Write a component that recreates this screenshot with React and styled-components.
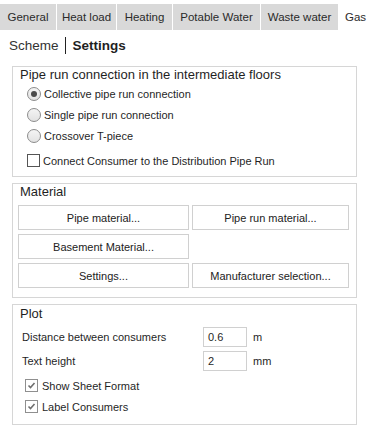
import React from 'react';
import styled, { createGlobalStyle } from 'styled-components';

const GlobalStyle = createGlobalStyle`
  body {
    margin: 0;
    background: #ffffff;
    font-family: "Liberation Sans", Arial, sans-serif;
    color: #1f1f1f;
  }
`;

const Page = styled.div`
  width: 373px;
  height: 431px;
  padding-top: 4px;
  box-sizing: border-box;
`;

const TabBar = styled.div`
  display: flex;
  height: 26px;
`;

const Tab = styled.div`
  display: flex;
  align-items: center;
  justify-content: center;
  width: ${({ w }) => w}px;
  background: ${({ active }) => (active ? '#ffffff' : '#d9d9d9')};
  border-right: 1px solid #ffffff;
  font-size: 11.5px;
  color: #2a2a2a;
  box-sizing: border-box;
`;

const SubNav = styled.div`
  display: flex;
  align-items: center;
  height: 30px;
  padding-left: 9px;
  font-size: 13.5px;
`;

const SubItem = styled.span`
  font-weight: ${({ active }) => (active ? 700 : 400)};
  color: ${({ active }) => (active ? '#1f1f1f' : '#333333')};
`;

const SubDivider = styled.span`
  width: 1px;
  height: 17px;
  background: #222;
  margin: 0 7px 0 6px;
`;

const Content = styled.div`
  display: flex;
  flex-direction: column;
  gap: 6px;
  padding: 6px 0 0 12px;
  width: 345px;
`;

const Group = styled.div`
  border: 1px solid #d6d6d6;
  padding: 0 5px ${({ pb }) => pb}px 5px;
`;

const GroupTitle = styled.div`
  font-size: 13px;
  line-height: ${({ lh }) => lh || 16}px;
  padding-left: 2px;
  color: #1f1f1f;
`;

const OptionRow = styled.label`
  display: flex;
  align-items: center;
  height: 21px;
  padding-left: ${({ indent }) => indent}px;
  margin-top: ${({ mt }) => mt || 0}px;
  font-size: 11px;
  gap: ${({ gap }) => gap || 3}px;
`;

const Radio = styled.span`
  width: 12px;
  height: 12px;
  border-radius: 50%;
  border: 1px solid #8c8c8c;
  background: linear-gradient(#f4f4f4, #e2e2e2);
  display: flex;
  align-items: center;
  justify-content: center;
  &::after {
    content: '';
    width: 6px;
    height: 6px;
    border-radius: 50%;
    background: ${({ checked }) => (checked ? '#4a4a4a' : 'transparent')};
  }
`;

const Check = styled.span`
  width: 11px;
  height: 11px;
  border: 1px solid ${({ checked }) => (checked ? '#8f8f8f' : '#555')};
  background: #fff;
  display: flex;
  align-items: center;
  justify-content: center;
`;

const ButtonGrid = styled.div`
  display: grid;
  grid-template-columns: 171px 157px;
  column-gap: 3px;
  row-gap: 4px;
  margin-top: 5px;
`;

const Button = styled.div`
  height: 23px;
  border: 1px solid #d0d0d0;
  background: #fff;
  display: flex;
  align-items: center;
  justify-content: center;
  font-size: 11px;
  color: #222;
`;

const FieldRow = styled.div`
  display: flex;
  align-items: center;
  height: 20px;
  margin-top: ${({ mt }) => mt}px;
  padding-left: 4px;
  font-size: 11px;
`;

const FieldLabel = styled.span`
  width: 181px;
`;

const Input = styled.div`
  width: 38px;
  height: 18px;
  border: 1px solid #d0d0d0;
  padding-left: 4px;
  display: flex;
  align-items: center;
  margin-right: 6px;
`;

const CheckMark = () => (
  <svg width="9" height="9" viewBox="0 0 9 9">
    <path d="M1.5 4.5 L3.5 6.5 L7.5 2" fill="none" stroke="#6f6f6f" strokeWidth="1.6" />
  </svg>
);

const tabs = [
  ['General', 57],
  ['Heat load', 60],
  ['Heating', 56],
  ['Potable Water', 88],
  ['Waste water', 78],
  ['Gas', 34],
];

export default function App() {
  return (
    <Page>
      <GlobalStyle />
      <TabBar>
        {tabs.map(([name, w]) => (
          <Tab key={name} w={w} active={name === 'Gas'}>{name}</Tab>
        ))}
      </TabBar>
      <SubNav>
        <SubItem>Scheme</SubItem>
        <SubDivider />
        <SubItem active>Settings</SubItem>
      </SubNav>
      <Content>
        <Group pb={5}>
          <GroupTitle>Pipe run connection in the intermediate floors</GroupTitle>
          <OptionRow indent={9}><Radio checked />Collective pipe run connection</OptionRow>
          <OptionRow indent={9}><Radio />Single pipe run connection</OptionRow>
          <OptionRow indent={9}><Radio />Crossover T-piece</OptionRow>
          <OptionRow indent={9} mt={4}><Check />Connect Consumer to the Distribution Pipe Run</OptionRow>
        </Group>
        <Group pb={9}>
          <GroupTitle>Material</GroupTitle>
          <ButtonGrid>
            <Button>Pipe material...</Button>
            <Button>Pipe run material...</Button>
            <Button>Basement Material...</Button>
            <div />
            <Button>Settings...</Button>
            <Button>Manufacturer selection...</Button>
          </ButtonGrid>
        </Group>
        <Group pb={7}>
          <GroupTitle lh={18}>Plot</GroupTitle>
          <FieldRow mt={4}>
            <FieldLabel>Distance between consumers</FieldLabel>
            <Input>0.6</Input>m
          </FieldRow>
          <FieldRow mt={4}>
            <FieldLabel>Text height</FieldLabel>
            <Input>2</Input>mm
          </FieldRow>
          <OptionRow indent={7} mt={4} gap={4}><Check checked><CheckMark /></Check>Show Sheet Format</OptionRow>
          <OptionRow indent={7} gap={4}><Check checked><CheckMark /></Check>Label Consumers</OptionRow>
        </Group>
      </Content>
    </Page>
  );
}
